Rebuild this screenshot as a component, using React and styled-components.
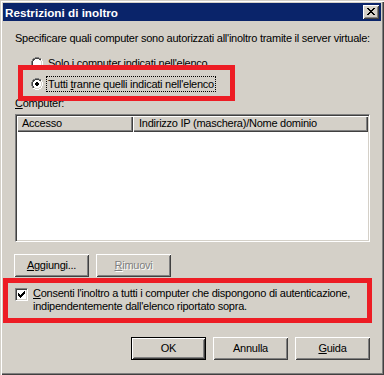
import React from "react";
import styled, { createGlobalStyle } from "styled-components";

const Global = createGlobalStyle`
  html, body { margin: 0; padding: 0; background: #d4d0c8; }
  body { font-family: "Liberation Sans", Arial, sans-serif; }
`;

const Window = styled.div`
  position: relative;
  width: 384px;
  height: 375px;
  box-sizing: border-box;
  padding: 3px;
  background: #d4d0c8;
  box-shadow: inset 1px 1px #d4d0c8, inset 2px 2px #ffffff,
    inset -1px -1px #404040, inset -2px -2px #808080;
  display: flex;
  flex-direction: column;
  font-family: "Liberation Sans", Arial, sans-serif;
  font-size: 11px;
  line-height: 13px;
  letter-spacing: -0.25px;
  color: #000;
`;

const TitleBar = styled.div`
  height: 18px;
  flex: none;
  background: #0a246a;
  display: flex;
  align-items: center;
  justify-content: space-between;
  padding: 0 2px 0 2px;
`;

const Title = styled.span`
  color: #fff;
  font-weight: bold;
  font-size: 11.7px;
  letter-spacing: 0;
`;

const CloseButton = styled.div`
  width: 16px;
  height: 14px;
  box-sizing: border-box;
  background: #d4d0c8;
  box-shadow: inset 1px 1px #ffffff, inset -1px -1px #404040,
    inset 2px 2px #d4d0c8, inset -2px -2px #808080;
  display: flex;
  align-items: center;
  justify-content: center;
  padding: 0 0 1px 0;
`;

const Body = styled.div`
  flex: 1;
  display: flex;
  flex-direction: column;
  padding: 11px 11px 0 12px;
`;

const Text = styled.div`
  white-space: nowrap;
  margin-top: ${(p) => p.$mt || 0}px;
`;

const RadioGroup = styled.div`
  display: flex;
  flex-direction: column;
  gap: 5px;
  margin-top: 10px;
  padding-left: 16px;
`;

const RadioRow = styled.div`
  position: relative;
  display: flex;
  align-items: center;
  width: fit-content;
  height: 16px;
  gap: 3px;
`;

const Label = styled.span`
  border: 1px dotted ${(p) => (p.$focus ? "#000" : "transparent")};
  padding: 1px 1px 0 1px;
  white-space: nowrap;
`;

const Key = styled.u`
  text-decoration: underline;
`;

const Highlight = styled.div`
  position: absolute;
  pointer-events: none;
  z-index: 2;
  border: 5px solid #ed1c24;
  top: ${(p) => p.$t}px;
  left: ${(p) => p.$l}px;
  right: ${(p) => p.$r}px;
  bottom: ${(p) => p.$b}px;
`;

const ListView = styled.div`
  margin-top: 4px;
  height: 128px;
  box-sizing: border-box;
  border: 1px solid;
  border-color: #808080 #ffffff #ffffff #808080;
  box-shadow: inset 1px 1px #404040, inset -1px -1px #d4d0c8;
  background: #fff;
  padding: 1px;
  display: flex;
  flex-direction: column;
`;

const Header = styled.div`
  display: flex;
  height: 16px;
  flex: none;
`;

const HeaderCell = styled.div`
  box-sizing: border-box;
  background: #d4d0c8;
  box-shadow: inset 1px 1px #ffffff, inset -1px -1px #404040,
    inset -2px -2px #808080;
  padding: 1px 0 0 ${(p) => p.$pl}px;
  width: ${(p) => (p.$w ? `${p.$w}px` : "auto")};
  flex: ${(p) => (p.$w ? "none" : "1")};
  white-space: nowrap;
  overflow: hidden;
`;

const ButtonRow = styled.div`
  display: flex;
  gap: 7px;
  margin-top: 12px;
  margin-left: -1px;
`;

const Button = styled.div`
  width: 75px;
  height: 23px;
  box-sizing: border-box;
  display: flex;
  align-items: center;
  justify-content: center;
  background: #d4d0c8;
  color: ${(p) => (p.$disabled ? "#808080" : "#000")};
  text-shadow: ${(p) => (p.$disabled ? "1px 1px #ffffff" : "none")};
  box-shadow: ${(p) =>
    p.$default
      ? "inset 0 0 0 1px #000, inset 2px 2px #ffffff, inset -2px -2px #404040, inset 3px 3px #d4d0c8, inset -3px -3px #808080"
      : "inset 1px 1px #ffffff, inset -1px -1px #404040, inset 2px 2px #d4d0c8, inset -2px -2px #808080"};
`;

const CheckRow = styled.div`
  position: relative;
  display: flex;
  align-items: flex-start;
  gap: 5px;
  margin-top: 10px;
`;

const CheckBox = styled.div`
  width: 13px;
  height: 13px;
  margin-top: 1px;
  box-sizing: border-box;
  flex: none;
  border: 1px solid;
  border-color: #808080 #ffffff #ffffff #808080;
  box-shadow: inset 1px 1px #404040, inset -1px -1px #d4d0c8;
  background: #fff;
  padding: 2px;
`;

const CheckText = styled.div`
  white-space: nowrap;
`;

const Footer = styled.div`
  display: flex;
  justify-content: flex-end;
  gap: 7px;
  margin-top: 24px;
`;

function PixelIcon({ rows, palette }) {
  const rects = [];
  rows.forEach((row, y) =>
    [...row].forEach((c, x) => {
      if (palette[c])
        rects.push(
          <rect key={`${x}-${y}`} x={x} y={y} width={1} height={1} fill={palette[c]} />
        );
    })
  );
  const w = rows[0].length;
  const h = rows.length;
  return (
    <svg
      width={w}
      height={h}
      viewBox={`0 0 ${w} ${h}`}
      shapeRendering="crispEdges"
      style={{ display: "block", flex: "none" }}
    >
      {rects}
    </svg>
  );
}

function radioRows(checked) {
  const rows = [];
  for (let y = 0; y < 12; y++) {
    let row = "";
    for (let x = 0; x < 12; x++) {
      const dx = x - 5.5;
      const dy = y - 5.5;
      const r = Math.sqrt(dx * dx + dy * dy);
      const tl = dx + dy <= 0;
      if (r >= 6.0) row += ".";
      else if (r > 5.0) row += tl ? "G" : "W";
      else if (r > 4.0) row += tl ? "D" : "L";
      else if (checked && r < 2.1) row += "K";
      else row += "W";
    }
    rows.push(row);
  }
  return rows;
}

const radioPalette = { G: "#808080", D: "#404040", W: "#ffffff", L: "#d4d0c8", K: "#000000" };

const Radio = ({ checked }) => <PixelIcon rows={radioRows(checked)} palette={radioPalette} />;

const checkRows = [
  "......X",
  ".....XX",
  "X...XXX",
  "XX.XXX.",
  "XXXXX..",
  ".XXX...",
  "..X....",
];

const closeRows = [
  "XX....XX",
  ".XX..XX.",
  "..XXXX..",
  "...XX...",
  "..XXXX..",
  ".XX..XX.",
  "XX....XX",
];

export default function App() {
  return (
    <>
      <Global />
      <Window>
        <TitleBar>
          <Title>Restrizioni di inoltro</Title>
          <CloseButton>
            <PixelIcon rows={closeRows} palette={{ X: "#000" }} />
          </CloseButton>
        </TitleBar>
        <Body>
          <Text>
            Specificare quali computer sono autorizzati all'inoltro tramite il server virtuale:
          </Text>
          <RadioGroup>
            <RadioRow>
              <Radio checked={false} />
              <Label>
                <Key>S</Key>olo i computer indicati nell'elenco
              </Label>
            </RadioRow>
            <RadioRow>
              <Radio checked />
              <Label $focus>
                Tutti <Key>t</Key>ranne quelli indicati nell'elenco
              </Label>
              <Highlight $t={-11} $l={-13} $r={-19} $b={-9} />
            </RadioRow>
          </RadioGroup>
          <Text $mt={5}>
            <Key>C</Key>omputer:
          </Text>
          <ListView>
            <Header>
              <HeaderCell $w={116} $pl={5}>
                Accesso
              </HeaderCell>
              <HeaderCell $pl={6}>Indirizzo IP (maschera)/Nome dominio</HeaderCell>
            </Header>
          </ListView>
          <ButtonRow>
            <Button>
              <Key>A</Key>ggiungi...
            </Button>
            <Button $disabled>
              <Key>R</Key>imuovi
            </Button>
          </ButtonRow>
          <CheckRow>
            <CheckBox>
              <PixelIcon rows={checkRows} palette={{ X: "#000" }} />
            </CheckBox>
            <CheckText>
              <Key>C</Key>onsenti l'inoltro a tutti i computer che dispongono di autenticazione,
              <br />
              indipendentemente dall'elenco riportato sopra.
            </CheckText>
            <Highlight $t={-9} $l={-12} $r={-2} $b={-10} />
          </CheckRow>
          <Footer>
            <Button $default>OK</Button>
            <Button>Annulla</Button>
            <Button>
              <Key>G</Key>uida
            </Button>
          </Footer>
        </Body>
      </Window>
    </>
  );
}
